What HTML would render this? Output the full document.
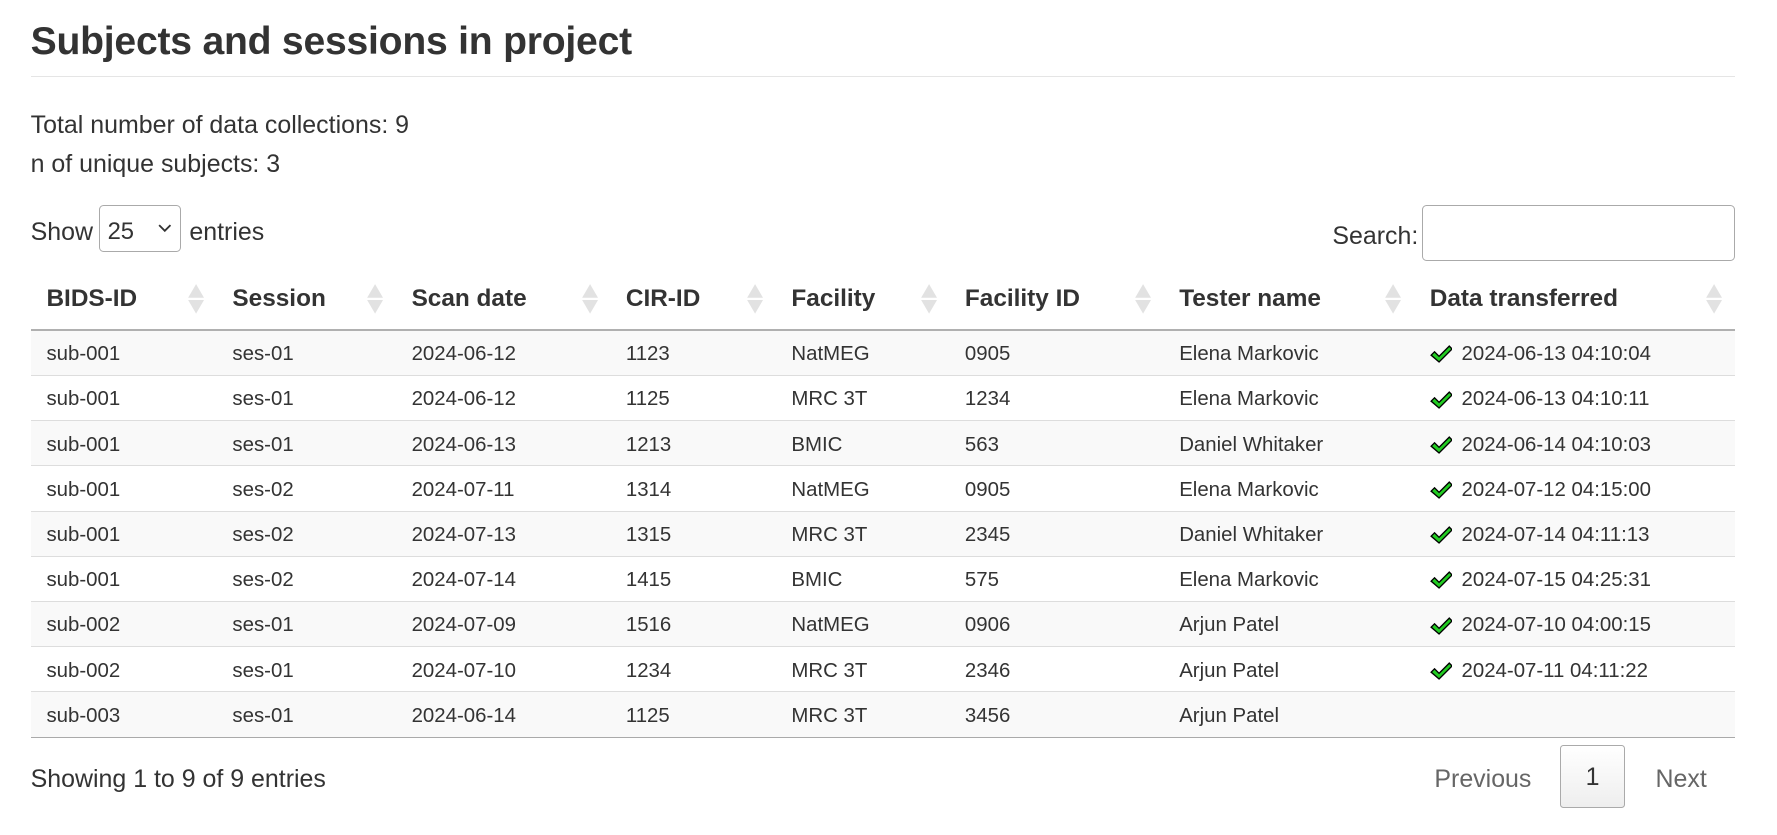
<!DOCTYPE html>
<html><head><meta charset="utf-8"><style>
html,body{margin:0;padding:0;background:#fff;}
body{width:1560px;height:733px;zoom:1.1339;font-family:"Liberation Sans",sans-serif;color:#333;overflow:hidden;position:relative;}
h1{position:absolute;left:27px;top:18px;margin:0;font-size:34.5px;font-weight:bold;color:#333;letter-spacing:-0.2px;}
.hr{position:absolute;left:27px;top:67px;width:1503px;height:1px;background:#e5e5e5;}
.t{position:absolute;left:27px;font-size:22px;}
.sel{position:absolute;left:87px;top:181px;width:73px;height:41px;border:1px solid #aaa;border-radius:4px;box-sizing:border-box;font-size:21px;padding:10px 0 0 7px;}
.sel svg{position:absolute;right:8px;top:16px;}
.search{position:absolute;left:1254px;top:181px;width:276px;height:49px;border:1px solid #aaa;border-radius:4px;box-sizing:border-box;}
table{position:absolute;left:27px;top:236px;border-collapse:collapse;width:1503px;table-layout:fixed;}
th{font-size:21.5px;font-weight:bold;text-align:left;padding:2px 14px 0;height:52px;border-bottom:2px solid #b0b0b0;position:relative;color:#333;}
th .s{position:absolute;right:10px;top:14px;}
td{font-size:18px;padding:3px 14px 0;height:36px;border-top:1px solid #ddd;}
tr.o td{background:#f9f9f9;}
tr:last-child td{border-bottom:1px solid #aaa;}
td svg{vertical-align:-3px;margin-right:8px;}
.pg{position:absolute;top:657px;font-size:22px;color:#666;}
.one{position:absolute;left:1376px;top:657px;width:57px;height:56px;border:1px solid #aaa;border-radius:3px;box-sizing:border-box;background:linear-gradient(#fff,#eee);text-align:center;line-height:56px;font-size:22px;color:#333;}
</style></head><body>
<h1>Subjects and sessions in project</h1>
<div class="hr"></div>
<div class="t" style="top:98px">Total number of data collections: 9</div>
<div class="t" style="top:132px">n of unique subjects: 3</div>
<div class="t" style="top:192px">Show</div>
<div class="sel">25<svg width="12" height="8" viewBox="0 0 12 8"><path d="M1 1l5 5 5-5" fill="none" stroke="#333" stroke-width="1.6"/></svg></div>
<div class="t" style="top:192px;left:167px">entries</div>
<div class="t" style="top:196px;left:1175px">Search:</div>
<div class="search"></div>
<table>
<colgroup><col style="width:164px"><col style="width:158px"><col style="width:189px"><col style="width:146px"><col style="width:153px"><col style="width:189px"><col style="width:221px"><col style="width:283px"></colgroup>
<thead><tr>
<th>BIDS-ID<span class="s"><svg width="16" height="28"><path d="M8 1L15 13H1Z M8 27L15 15H1Z" fill="#e2e2e2"/></svg></span></th>
<th>Session<span class="s"><svg width="16" height="28"><path d="M8 1L15 13H1Z M8 27L15 15H1Z" fill="#e2e2e2"/></svg></span></th>
<th>Scan date<span class="s"><svg width="16" height="28"><path d="M8 1L15 13H1Z M8 27L15 15H1Z" fill="#e2e2e2"/></svg></span></th>
<th>CIR-ID<span class="s"><svg width="16" height="28"><path d="M8 1L15 13H1Z M8 27L15 15H1Z" fill="#e2e2e2"/></svg></span></th>
<th>Facility<span class="s"><svg width="16" height="28"><path d="M8 1L15 13H1Z M8 27L15 15H1Z" fill="#e2e2e2"/></svg></span></th>
<th>Facility ID<span class="s"><svg width="16" height="28"><path d="M8 1L15 13H1Z M8 27L15 15H1Z" fill="#e2e2e2"/></svg></span></th>
<th>Tester name<span class="s"><svg width="16" height="28"><path d="M8 1L15 13H1Z M8 27L15 15H1Z" fill="#e2e2e2"/></svg></span></th>
<th>Data transferred<span class="s"><svg width="16" height="28"><path d="M8 1L15 13H1Z M8 27L15 15H1Z" fill="#e2e2e2"/></svg></span></th>
</tr></thead>
<tbody>
<tr class="o"><td>sub-001</td><td>ses-01</td><td>2024-06-12</td><td>1123</td><td>NatMEG</td><td>0905</td><td>Elena Markovic</td><td><svg width="20" height="16" viewBox="0 0 20 16"><path d="M1 9l3-3 4 4 9-9 2.5 2.5L8 15Z" fill="#2c2" stroke="#000" stroke-width="1.2"/></svg>2024-06-13 04:10:04</td></tr>
<tr><td>sub-001</td><td>ses-01</td><td>2024-06-12</td><td>1125</td><td>MRC 3T</td><td>1234</td><td>Elena Markovic</td><td><svg width="20" height="16" viewBox="0 0 20 16"><path d="M1 9l3-3 4 4 9-9 2.5 2.5L8 15Z" fill="#2c2" stroke="#000" stroke-width="1.2"/></svg>2024-06-13 04:10:11</td></tr>
<tr class="o"><td>sub-001</td><td>ses-01</td><td>2024-06-13</td><td>1213</td><td>BMIC</td><td>563</td><td>Daniel Whitaker</td><td><svg width="20" height="16" viewBox="0 0 20 16"><path d="M1 9l3-3 4 4 9-9 2.5 2.5L8 15Z" fill="#2c2" stroke="#000" stroke-width="1.2"/></svg>2024-06-14 04:10:03</td></tr>
<tr><td>sub-001</td><td>ses-02</td><td>2024-07-11</td><td>1314</td><td>NatMEG</td><td>0905</td><td>Elena Markovic</td><td><svg width="20" height="16" viewBox="0 0 20 16"><path d="M1 9l3-3 4 4 9-9 2.5 2.5L8 15Z" fill="#2c2" stroke="#000" stroke-width="1.2"/></svg>2024-07-12 04:15:00</td></tr>
<tr class="o"><td>sub-001</td><td>ses-02</td><td>2024-07-13</td><td>1315</td><td>MRC 3T</td><td>2345</td><td>Daniel Whitaker</td><td><svg width="20" height="16" viewBox="0 0 20 16"><path d="M1 9l3-3 4 4 9-9 2.5 2.5L8 15Z" fill="#2c2" stroke="#000" stroke-width="1.2"/></svg>2024-07-14 04:11:13</td></tr>
<tr><td>sub-001</td><td>ses-02</td><td>2024-07-14</td><td>1415</td><td>BMIC</td><td>575</td><td>Elena Markovic</td><td><svg width="20" height="16" viewBox="0 0 20 16"><path d="M1 9l3-3 4 4 9-9 2.5 2.5L8 15Z" fill="#2c2" stroke="#000" stroke-width="1.2"/></svg>2024-07-15 04:25:31</td></tr>
<tr class="o"><td>sub-002</td><td>ses-01</td><td>2024-07-09</td><td>1516</td><td>NatMEG</td><td>0906</td><td>Arjun Patel</td><td><svg width="20" height="16" viewBox="0 0 20 16"><path d="M1 9l3-3 4 4 9-9 2.5 2.5L8 15Z" fill="#2c2" stroke="#000" stroke-width="1.2"/></svg>2024-07-10 04:00:15</td></tr>
<tr><td>sub-002</td><td>ses-01</td><td>2024-07-10</td><td>1234</td><td>MRC 3T</td><td>2346</td><td>Arjun Patel</td><td><svg width="20" height="16" viewBox="0 0 20 16"><path d="M1 9l3-3 4 4 9-9 2.5 2.5L8 15Z" fill="#2c2" stroke="#000" stroke-width="1.2"/></svg>2024-07-11 04:11:22</td></tr>
<tr class="o"><td>sub-003</td><td>ses-01</td><td>2024-06-14</td><td>1125</td><td>MRC 3T</td><td>3456</td><td>Arjun Patel</td><td></td></tr>
</tbody></table>
<div class="t" style="top:675px">Showing 1 to 9 of 9 entries</div>
<div class="pg" style="left:1265px;top:675px">Previous</div>
<div class="one">1</div>
<div class="pg" style="left:1460px;top:675px">Next</div>
</body></html>
